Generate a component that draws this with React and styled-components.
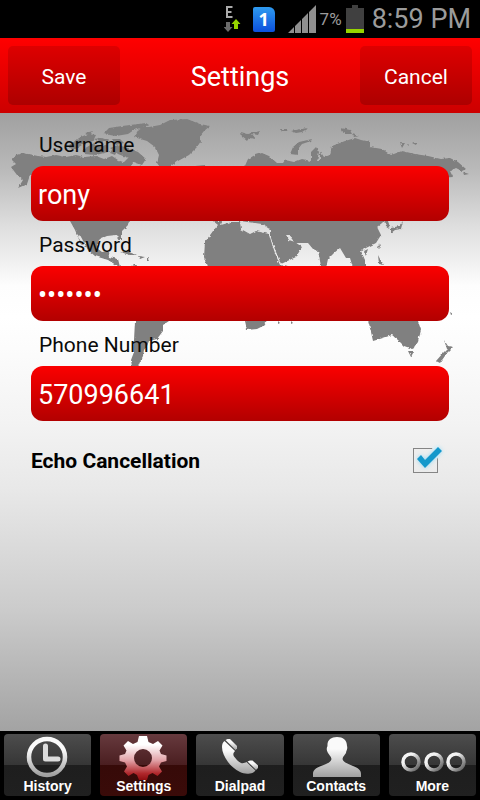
import { useState } from "react";
import styled, { createGlobalStyle } from "styled-components";

const GlobalStyle = createGlobalStyle`
  * {
    box-sizing: border-box;
  }

  body {
    margin: 0;
    background: #000;
    font-family: Roboto, sans-serif;
  }

  button,
  input {
    font-family: inherit;
  }
`;

const Page = styled.div`
  display: flex;
  flex-direction: column;
  min-height: 100vh;
`;

const StatusBar = styled.div`
  display: flex;
  align-items: center;
  justify-content: flex-end;
  height: 38px;
  padding: 0 9px;
  background: #000;
  color: #9b9b9b;

  svg {
    display: block;
  }
`;

const StatusIcons = styled.div`
  display: flex;
  align-items: center;
  gap: 12px;
  margin-right: 13px;
`;

const Percent = styled.span`
  margin: 0 4px;
  font-size: 17px;
`;

const Clock = styled.time`
  margin-left: 8px;
  font-size: 27px;
`;

const Header = styled.header`
  display: grid;
  grid-template-columns: 112px 1fr 112px;
  align-items: center;
  padding: 8px;
  background: linear-gradient(#ff0000, #cc0000);
`;

const Title = styled.h1`
  margin: 0;
  padding-top: 2px;
  color: #fff;
  font-size: 27px;
  font-weight: 400;
  text-align: center;
`;

const HeaderButton = styled.button`
  height: 59px;
  padding: 2px 0 0;
  border: 0;
  border-radius: 5px;
  background: linear-gradient(#de0000, #ad0000);
  color: #fff;
  font-size: 21px;
`;

const Content = styled.main`
  flex: 1;
  display: grid;
  align-items: start;
  background: linear-gradient(
    #a0a0a0 0%,
    #b9b9b9 9%,
    #dddddd 18%,
    #fdfdfd 28%,
    #ffffff 33%,
    #fcfcfc 38%,
    #f3f3f3 50%,
    #e8e8e8 61%,
    #cccccc 80%,
    #a3a3a3 100%
  );

  > * {
    grid-area: 1 / 1;
  }
`;

const Map = styled.svg`
  display: block;
  width: 100%;
`;

const Form = styled.form`
  display: flex;
  flex-direction: column;
  padding: 8px 31px;
`;

const Label = styled.label`
  padding: 4px 8px 0;
  color: #0a0a0a;
  font-size: 21px;
  line-height: 41px;
`;

const Field = styled.input`
  width: 100%;
  height: 55px;
  padding: 2px 7px 0;
  border: 0;
  border-radius: 12px;
  outline: none;
  background: linear-gradient(#fb0000, #b20000);
  color: #fff;
  font-size: 27px;
`;

const CheckRow = styled.label`
  display: flex;
  align-items: center;
  justify-content: space-between;
  height: 79px;
  padding-right: 11px;
  color: #000;
  font-size: 21px;
  font-weight: 700;
`;

const CheckBox = styled.span`
  display: grid;

  > * {
    grid-area: 1 / 1;
  }

  input {
    appearance: none;
    width: 25px;
    height: 25px;
    margin: 0;
    border: 1px solid #858585;
  }

  svg {
    display: none;
    overflow: visible;
    pointer-events: none;
  }

  input:checked + svg {
    display: block;
  }
`;

const TabBar = styled.nav`
  display: grid;
  grid-template-columns: repeat(5, 1fr);
  gap: 9px;
  padding: 3px 4px 4px;
  background: #000;
`;

const Tab = styled.button`
  display: flex;
  flex-direction: column;
  align-items: center;
  padding: 1px 0;
  border: 0;
  border-radius: 4px;
  background: ${({ $active }) =>
    $active
      ? "linear-gradient(#673a3e, #4a1e20 50%, #360a08 50%, #3a0b09)"
      : "linear-gradient(#4d4d4d, #363636 50%, #1e1e1e 50%, #202020)"};
  color: #fff;
  font-family: "Liberation Sans", Arial, sans-serif;
  font-size: 14px;
  font-weight: 700;
  line-height: 18px;

  svg {
    display: block;
    overflow: visible;
  }
`;

const TabLabel = styled.span`
  z-index: 1;
`;

function WorldMap() {
  return (
    <Map viewBox="0 113 480 260" aria-hidden="true">
      <defs>
        <filter id="coast" x="0" y="0" width="100%" height="100%">
          <feTurbulence
            type="fractalNoise"
            baseFrequency="0.25"
            numOctaves="2"
            seed="4"
          />
          <feDisplacementMap
            in="SourceGraphic"
            scale="3"
            xChannelSelector="R"
            yChannelSelector="G"
          />
          <feGaussianBlur stdDeviation="0.4" />
        </filter>
      </defs>
      <g fill="#808080" filter="url(#coast)">
        {/* North America */}
        <path d="M11 167L16 164L12 160L16 155L23 153L38 156L46 157L56 155L66 157L76 155L84 157L96 156L104 159L112 156L118 160L128 164L134 174L142 190L146 200L130 221L128 225L122 231L122 240L119 240L116 235L107 236L100 239L97 243L98 249L102 252L108 251L109 257L118 259L120 267L116 265L108 260L95 256L88 250L80 235L78 237L84 246L80 242L75 230L70 221L58 200L48 182L38 174L30 175L27 184L18 188L23 180L17 175L14 171Z" />
        <path d="M68 147L78 138L88 134L96 135L93 141L82 145L74 150ZM82 150L92 144L104 147L108 152L96 155L84 154ZM94 139L102 137L110 140L101 143ZM112 139L120 139L124 143L116 145ZM110 148L118 145L128 148L138 152L146 159L142 165L134 162L130 167L122 164L128 158L118 154ZM103 134L109 128L122 126L146 123L149 125L134 130L128 134L116 136ZM113 148L118 149L115 155L110 153ZM85 133L93 131L90 135ZM100 147L108 144L106 150Z" />
        <path d="M120 252L128 251L137 255L130 255ZM138 256L145 257L140 259ZM147 257L149 261L147 261ZM131 265L138 265L136 267Z" />
        {/* Greenland and Iceland */}
        <path d="M134 137L140 127L149 127L160 125L170 120L187 119L200 124L210 126L204 131L200 136L201 141L197 147L189 155L178 161L168 168L162 170L157 163L159 155L155 147L147 141ZM195 166L205 165L209 169L200 171Z" />
        {/* South America */}
        <path d="M118 268L140 266L168 280L178 290L169 321L163 325L163 331L157 339L149 341L147 346L144 350L143 356L140 362L138 367L132 367L131 360L134 352L134 340L135 321L126 296Z" />
        {/* Africa */}
        <path d="M213 221L222 221L221 225L231 222L240 222L241 229L250 234L256 231L269 234L272 244L275 253L280 265L292 268L282 290L274 306L266 322L263 326L257 329L247 330L245 321L238 294L230 275L207 267L204 257L205 242L213 231L218 225Z" />
        {/* Europe and Asia */}
        <path d="M244 168L248 159L255 155L262 153L269 156L277 163L283 163L285 160L294 162L302 159L311 161L311 152L316 147L319 152L317 161L320 161L320 151L324 157L330 155L332 146L345 141L355 138L361 140L370 142L370 147L382 149L391 155L402 151L415 154L428 156L441 159L450 158L458 162L466 169L462 171L456 168L450 171L453 177L440 178L424 190L418 201L404 207L390 215L382 223L377 227L381 235L376 243L366 248L361 251L365 260L365 270L353 268L350 258L346 258L340 248L334 253L328 259L326 268L321 266L318 251L313 249L308 243L295 243L289 235L286 235L289 240L295 242L302 247L296 257L281 264L276 252L271 238L271 230L262 224L240 221L234 200L236 184L248 178Z" />
        <path d="M241 132L248 134L260 131L258 135L252 134L256 139L249 138L247 141L242 137ZM280 129L288 129L287 131L281 131ZM291 131L301 129L308 128L302 132L296 133ZM312 139L311 141L302 144L298 149L298 155L290 154L293 147L299 142ZM341 128L350 130L352 134L344 134ZM352 134L359 136L354 137ZM400 143L405 143L402 148ZM407 144L409 144L408 145ZM412 143L417 143L416 145ZM463 172L469 174L464 175Z" />
        <path d="M384 221L388 221L390 227L387 228ZM403 221L401 229L395 230L391 233L391 228L399 226ZM379 243L380 247L378 249ZM364 251L368 249L366 255ZM378 255L380 259L384 265L379 264Z" />
        {/* Oceania */}
        <path d="M368 321L375 305L395 295L408 300L418 321L421 330L418 342L413 349L404 346L398 340L392 335L383 338L373 341L371 332ZM408 351L414 351L411 357ZM444 340L448 346L453 347L447 353L440 363L436 361L443 353L447 349ZM450 312L453 314L451 315ZM278 321L280 323L278 324ZM291 321L293 323L291 324Z" />
      </g>
    </Map>
  );
}

function DataIcon() {
  return (
    <svg width="17" height="28" viewBox="0 0 17 28">
      <path d="M2 2H8.500M3 2V12M3 7H7.500M2 12H8.500" fill="none" stroke="#aaa" strokeWidth="2" />
      <path d="M2 17H6V22H8.500L4 27L-.5 22H2Z" fill="#6b6b6b" />
      <path d="M10 24V19H7.500L12 14L16.500 19H14V24Z" fill="#96d300" />
    </svg>
  );
}

const Sim = styled.span`
  width: 22px;
  border-radius: 2px 6px 2px 2px;
  background: linear-gradient(#2f9bf0, #0b4fdc);
  color: #fff;
  font-family: "Open Sans", sans-serif;
  font-size: 18px;
  font-weight: 700;
  line-height: 25px;
  text-align: center;
`;

function SignalIcon() {
  return (
    <svg width="28" height="28" viewBox="0 0 28 28">
      <path
        d="M0 28L6 22V28ZM7 28V21L13 15V28ZM14 28V14L20 8V28ZM21 28V7L28 0V28Z"
        fill="#8f8f8f"
      />
    </svg>
  );
}

function BatteryIcon() {
  return (
    <svg width="18" height="28" viewBox="0 0 18 28">
      <path d="M6 0H12V3H18V24H0V3H6Z" fill="#404040" />
      <path d="M0 24H18V28H0Z" fill="#96d300" />
    </svg>
  );
}

function CheckMark() {
  return (
    <svg width="25" height="25" viewBox="0 0 25 25">
      <defs>
        <filter id="glow" x="-40%" y="-40%" width="180%" height="180%">
          <feGaussianBlur stdDeviation="2" />
        </filter>
      </defs>
      <path d="M19 0L25 -3L29 3L24 11Z" fill="#edf3f5" />
      <path d="M4 11L8 7L12 12L25 -1L29 3L12 20Z" fill="#8fd8f5" filter="url(#glow)" />
      <path d="M4 11L8 7L12 12L25 -1L29 3L12 20Z" fill="#1498cb" />
    </svg>
  );
}

const icons = {
  History: (
    <>
      <circle cx="35" cy="22" r="18" fill="none" stroke="url(#silver)" strokeWidth="4.500" />
      <path d="M33.500 11V24H46" fill="none" stroke="#dcdcdc" strokeWidth="5" strokeLinecap="round" strokeLinejoin="round" />
    </>
  ),
  Settings: (
    <path
      fill="url(#ruby)"
      fillRule="evenodd"
      d="M31 1H39L40.500 7L45 9L50 6L54.500 10.500L51.500 15.500L53 19L58.500 20.500V26L53 27.500L51 31.500L54 36.500L49.500 41L44.500 38L40.500 40L39 45H31L29 40L25.500 38L20.500 41L16 36.500L19 31.500L17 27.500L11.500 26V20.500L17 19L18.500 15.500L15.500 10.500L20 6L25 9L29.500 7ZM35 14A9 9 0 1 0 35 32A9 9 0 1 0 35 14Z"
    />
  ),
  Dialpad: (
    <g fill="url(#silver)">
      <path d="M18 12C18 9 19 7 20.500 6L31 16C29 18 29 20 30 21.500C32 24 34 26.500 37 28C39 28.500 41 28 42.500 27L51.500 35.500C50 37.500 48 38.500 46 38.500C42 39 39 38.500 36 37C31 34.500 27 31 24 27C20.500 22 18 17 18 12Z" />
      <path d="M21.500 5L23.500 4H26L33 11V13.500L31.500 15Z" />
      <path d="M43.500 26.500L46 25.500H48.500L54 30.500V33L52 35Z" />
    </g>
  ),
  Contacts: (
    <path
      d="M37 2C43 2 47 5 47 11C48 14 46 16 46 18C45 20 43 21 42.500 24C43 27 48 29 53 31C58 33 61 35 61 39V42H13V39C13 35 16 33 21 31C27 29 31 27 31.500 24C31 21 29 20 28 18C27 16 26 14 27.500 11C27 5 31 2 37 2Z"
      fill="url(#silver)"
    />
  ),
  More: (
    <g fill="none" stroke="url(#ring)" strokeWidth="3.500">
      <circle cx="15" cy="27" r="8" />
      <circle cx="38" cy="27" r="8" />
      <circle cx="60" cy="27" r="8" />
    </g>
  ),
};

function TabIcon({ name }) {
  return (
    <svg width="72" height="42" viewBox="0 0 72 42" aria-hidden="true">
      <defs>
        <linearGradient id="silver" x1="0" y1="0" x2="0" y2="1">
          <stop offset="0.3" stopColor="#fafafa" />
          <stop offset="1" stopColor="#a0a0a0" />
        </linearGradient>
        <linearGradient id="ruby" x1="0" y1="0" x2="0" y2="1">
          <stop offset="0.2" stopColor="#ffffff" />
          <stop offset="0.55" stopColor="#e2a3a8" />
          <stop offset="0.85" stopColor="#b0282c" />
          <stop offset="1" stopColor="#8e0d10" />
        </linearGradient>
        <linearGradient id="ring" x1="0" y1="0" x2="1" y2="1">
          <stop offset="0.3" stopColor="#f4f4f4" />
          <stop offset="1" stopColor="#555555" />
        </linearGradient>
      </defs>
      {icons[name]}
    </svg>
  );
}

export default function App() {
  const [active, setActive] = useState("Settings");

  return (
    <Page>
      <GlobalStyle />
      <StatusBar>
        <StatusIcons>
          <DataIcon />
          <Sim>1</Sim>
        </StatusIcons>
        <SignalIcon />
        <Percent>7%</Percent>
        <BatteryIcon />
        <Clock>8:59 PM</Clock>
      </StatusBar>
      <Header>
        <HeaderButton type="submit" form="settings">
          Save
        </HeaderButton>
        <Title>Settings</Title>
        <HeaderButton type="reset" form="settings">
          Cancel
        </HeaderButton>
      </Header>
      <Content>
        <WorldMap />
        <Form id="settings" onSubmit={(e) => e.preventDefault()}>
          <Label htmlFor="username">Username</Label>
          <Field id="username" defaultValue="rony" />
          <Label htmlFor="password">Password</Label>
          <Field id="password" type="password" defaultValue="1234567" />
          <Label htmlFor="phone">Phone Number</Label>
          <Field id="phone" type="tel" defaultValue="570996641" />
          <CheckRow>
            Echo Cancellation
            <CheckBox>
              <input type="checkbox" defaultChecked />
              <CheckMark />
            </CheckBox>
          </CheckRow>
        </Form>
      </Content>
      <TabBar>
        {Object.keys(icons).map((name) => (
          <Tab
            key={name}
            type="button"
            $active={name === active}
            onClick={() => setActive(name)}
          >
            <TabIcon name={name} />
            <TabLabel>{name}</TabLabel>
          </Tab>
        ))}
      </TabBar>
    </Page>
  );
}
